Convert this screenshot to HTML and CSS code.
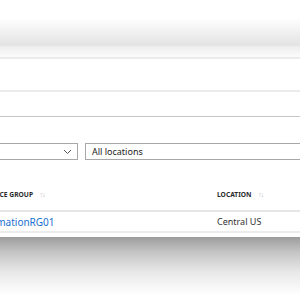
FILE: index.html
```html
<!DOCTYPE html>
<html lang="en">
<head>
    <meta charset="UTF-8">
    <title>Resource groups</title>
    <link rel="stylesheet" href="styles.css">
</head>
<body>

    <!-- Upper sheet with its shadow -->
    <div class="sheet-shade"></div>

    <!-- Blade -->
    <section class="blade">
        <div class="rule rule-soft"></div>
        <div class="gap gap-30"></div>
        <div class="rule rule-soft"></div>
        <div class="gap gap-24"></div>
        <div class="rule rule-mid"></div>
        <div class="gap gap-26"></div>

        <!-- Filters -->
        <div class="filters">
            <div class="select select-sub">
                <svg class="chevron" width="9" height="6" viewBox="0 0 9 6">
                    <path d="M1 1 L4.5 4.5 L8 1" fill="none" stroke="#555" stroke-width="1"/>
                </svg>
            </div>
            <div class="select select-loc">All locations</div>
        </div>

        <!-- Grid -->
        <div class="grid">
            <div class="grid-head">
                <div class="col col-name">RESOURCE GROUP <span class="sort">&uarr;&darr;</span></div>
                <div class="col col-loc">LOCATION <span class="sort">&uarr;&darr;</span></div>
            </div>
            <div class="grid-row">
                <div class="col col-name"><a href="#">AutomationRG01</a></div>
                <div class="col col-loc">Central US</div>
            </div>
        </div>
    </section>

    <!-- Drop shadow under the blade -->
    <div class="blade-shadow"></div>

</body>
</html>
```

FILE: styles.css
```css
body {
    margin: 0;
    width: 300px;
    height: 300px;
    overflow: hidden;
    background: #fff;
    font-family: "Noto Sans", "Open Sans", sans-serif;
    color: #333;
}

/* Upper sheet */
.sheet-shade {
    height: 57px;
    background: linear-gradient(to bottom,
        #fff 0, #fff 18px, #f3f3f3 30px, #e6e6e6 42px,
        #e3e3e3 45px, #efefef 47px, #fafafa 56px);
}

/* Blade */
.blade {
    background: #fff;
}

.rule {
    height: 2px;
}

.rule-soft {
    background: #ebebeb;
}

.rule-mid {
    height: 1px;
    background: #c6c6c6;
}

.gap-30 { height: 31px; }
.gap-24 { height: 24px; }
.gap-26 { height: 26px; }

/* Filters */
.filters {
    display: flex;
    gap: 7px;
    margin-left: -20px;
}

.select {
    height: 15px;
    border: 1px solid #a8a8a8;
    background: #fff;
    font-size: 9px;
    line-height: 15px;
    color: #222;
}

.select-sub {
    width: 91px;
    display: flex;
    align-items: center;
    justify-content: flex-end;
    padding-right: 5px;
}

.select-loc {
    flex: 1;
    padding-left: 6px;
    margin-right: -20px;
}

/* Grid */
.grid {
    margin-top: 29px;
    margin-left: -27px;
}

.grid-head, .grid-row {
    display: flex;
}

.col {
    box-sizing: border-box;
}

.grid-head {
    height: 23px;
    box-sizing: border-box;
    padding-bottom: 10px;
    align-items: center;
    font-size: 6.7px;
    font-weight: bold;
    color: #2b2b2b;
    border-bottom: 2px solid #e6e6e6;
}

.grid-row {
    height: 21px;
    box-sizing: border-box;
    align-items: center;
    font-size: 9px;
    border-bottom: 2px solid #ececec;
}

.col-name {
    width: 244px;
}

.grid-row .col-name {
    padding-left: 1px;
}

.col-loc {
    flex: 1;
}

.sort {
    color: #b8b8b8;
    font-weight: normal;
    margin-left: 5px;
    letter-spacing: -1px;
}

.grid-row a {
    font-size: 10px;
    color: #1a6fd0;
    text-decoration: none;
}

/* Shadow under the blade */
.blade-shadow {
    margin-top: 4px;
    height: 62px;
    background: linear-gradient(to bottom, #9c9c9c 0, #c4c4c4 15px, #e8e8e8 35px, #fff 58px);
}
```
